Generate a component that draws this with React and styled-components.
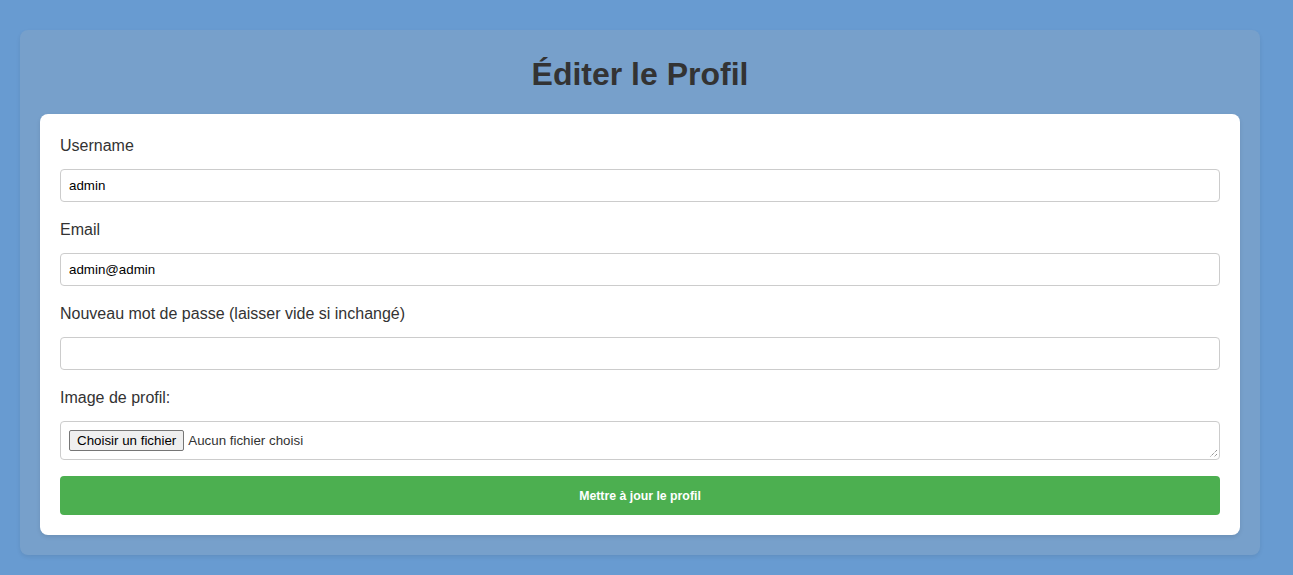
import React from "react";
import styled, { createGlobalStyle } from "styled-components";

const Global = createGlobalStyle`
  html, body { margin: 0; padding: 0; }
  body {
    background: #689bd1;
    font-family: "Liberation Sans", Arial, sans-serif;
    color: #333;
  }
`;

const Page = styled.div`
  padding: 30px 20px 20px;
`;

const Panel = styled.div`
  box-sizing: border-box;
  max-width: 1240px;
  background: #77a0cb;
  border-radius: 8px;
  padding: 26px 20px 20px;
  box-shadow: 0 2px 4px rgba(0, 0, 0, 0.08);
`;

const Title = styled.h1`
  margin: 0 0 21px;
  text-align: center;
  font-size: 32px;
  font-weight: bold;
  color: #333;
  line-height: normal;
`;

const Card = styled.form`
  background: #fff;
  border-radius: 8px;
  padding: 21px 20px 20px;
  box-shadow: 0 2px 4px rgba(0, 0, 0, 0.1);
  display: flex;
  flex-direction: column;
`;

const Group = styled.div`
  display: flex;
  flex-direction: column;
  margin-bottom: ${(p) => (p.$last ? "16px" : "17px")};
`;

const Label = styled.label`
  font-size: 16px;
  line-height: 19px;
  padding-top: 1px;
  color: #333;
  margin-bottom: 14px;
`;

const Input = styled.input`
  box-sizing: border-box;
  width: 100%;
  height: 33px;
  padding: 8px;
  border: 1px solid #ccc;
  border-radius: 4px;
  font: 13.333px "Liberation Sans", Arial, sans-serif;
  color: #000;
  outline: none;
`;

const FileBox = styled.div`
  position: relative;
  box-sizing: border-box;
  height: 39px;
  padding: 8px;
  border: 1px solid #ccc;
  border-radius: 4px;
  display: flex;
  align-items: center;
  gap: 4px;
  font: 13.333px "Liberation Sans", Arial, sans-serif;
`;

const FileButton = styled.button`
  font: 13.333px "Liberation Sans", Arial, sans-serif;
  color: #000;
  background: #efefef;
  border: 1px solid #767676;
  border-radius: 2px;
  padding: 1px 7px;
  height: 21px;
  line-height: 17px;
`;

const FileName = styled.span`
  color: #333;
`;

const Grip = styled.svg`
  position: absolute;
  right: 1px;
  bottom: 1px;
  width: 10px;
  height: 10px;
`;

const Submit = styled.button`
  height: 39px;
  width: 100%;
  border: none;
  border-radius: 4px;
  background: #4caf50;
  color: #fff;
  font: bold 12.3px "Liberation Sans", Arial, sans-serif;
  cursor: pointer;
`;

const Field = ({ label, value, type = "text" }) => (
  <Group>
    <Label>{label}</Label>
    <Input type={type} defaultValue={value} />
  </Group>
);

export default function App() {
  return (
    <>
      <Global />
      <Page>
        <Panel>
          <Title>Éditer le Profil</Title>
          <Card onSubmit={(e) => e.preventDefault()}>
            <Field label="Username" value="admin" />
            <Field label="Email" value="admin@admin" />
            <Field label="Nouveau mot de passe (laisser vide si inchangé)" value="" type="password" />
            <Group $last>
              <Label>Image de profil:</Label>
              <FileBox>
                <FileButton type="button">Choisir un fichier</FileButton>
                <FileName>Aucun fichier choisi</FileName>
                <Grip viewBox="0 0 10 10">
                  <path d="M9 2 L2 9 M9 6 L6 9" stroke="#666" strokeWidth="1" strokeDasharray="1 1" />
                </Grip>
              </FileBox>
            </Group>
            <Submit type="submit">Mettre à jour le profil</Submit>
          </Card>
        </Panel>
      </Page>
    </>
  );
}
